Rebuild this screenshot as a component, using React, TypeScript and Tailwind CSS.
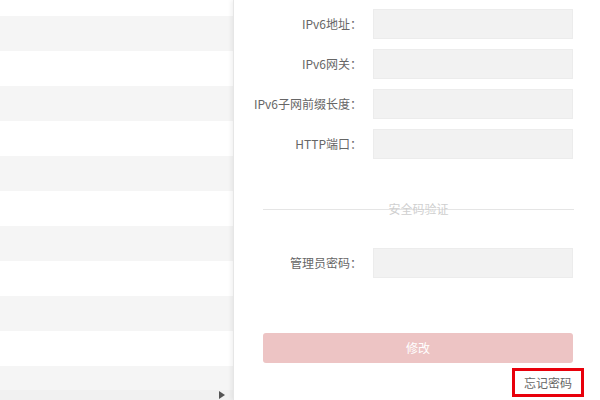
import React from 'react'

const fields = ['IPv6地址：', 'IPv6网关：', 'IPv6子网前缀长度：', 'HTTP端口：']

function FormRow({ label }: { label: string }) {
  return (
    <div className="flex items-center">
      <div className="flex w-[99px] shrink-0 justify-end">
        <span className="shrink-0 whitespace-nowrap text-[12px] text-[#666]">{label}</span>
      </div>
      <div className="ml-[11px] h-[30px] w-[200px] border border-[#ececec] bg-[#f2f2f2]" />
    </div>
  )
}

export default function App() {
  const rows = Array.from({ length: 11 }, (_, i) => i)

  return (
    <div className="flex h-[400px] w-[600px] overflow-hidden bg-white font-['Noto_Sans_CJK_SC','Noto_Sans',sans-serif]">
      {/* left list, scrolled */}
      <div className="flex w-[233px] shrink-0 flex-col">
        <div className="h-[390px] overflow-hidden">
          <div className="h-[16px] bg-white" />
          {rows.map((i) => (
            <div key={i} className={i % 2 === 0 ? 'h-[35px] bg-[#f5f5f5]' : 'h-[35px] bg-white'} />
          ))}
        </div>
        <div className="flex h-[10px] items-center justify-end bg-[#f1f1f1] pr-[8px]">
          <svg width="6" height="8" viewBox="0 0 6 8">
            <path d="M0 0 L6 4 L0 8 Z" fill="#555" />
          </svg>
        </div>
      </div>

      {/* right panel */}
      <div className="flex flex-1 flex-col border-l border-[#e6e6e6] pl-[29px] pr-[26px] pt-[9px] shadow-[-2px_0_4px_rgba(0,0,0,0.06)]">
        <div className="flex flex-col gap-[10px]">
          {fields.map((f) => (
            <FormRow key={f} label={f} />
          ))}
        </div>

        <div className="relative mt-[42px] flex h-[16px] items-center justify-center">
          <div className="absolute inset-x-0 top-[8px] h-px bg-[#e5e5e5]" />
          <span className="relative text-[12px] leading-none text-[#cfcfcf]">安全码验证</span>
        </div>

        <div className="mt-[31px]">
          <FormRow label="管理员密码：" />
        </div>

        <button className="mt-[55px] h-[30px] w-[310px] rounded-[3px] bg-[#edc4c4] text-[12px] text-white">
          修改
        </button>

        <div className="mt-[5px] flex w-[310px] justify-end">
          <a className="-mr-[11px] flex h-[29px] items-center border-[3px] border-[#e8000b] px-[9px] text-[12px] text-[#666]">
            忘记密码
          </a>
        </div>
      </div>
    </div>
  )
}
